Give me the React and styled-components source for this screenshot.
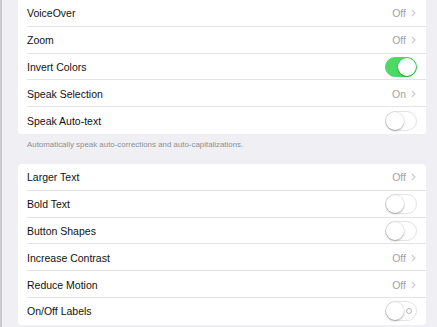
import React from "react";
import styled, { createGlobalStyle } from "styled-components";

const GlobalStyle = createGlobalStyle`
  html, body {
    margin: 0;
    padding: 0;
    background: #efeff4;
  }
  body {
    font-family: "Liberation Sans", Arial, sans-serif;
    -webkit-font-smoothing: antialiased;
  }
`;

const Page = styled.div`
  width: 437px;
  height: 327px;
  overflow: hidden;
  box-sizing: border-box;
  border-left: 2px solid #c9c9ce;
  padding: 0 11px 0 16px;
  background: #efeff4;
`;

const Card = styled.div`
  background: #fff;
  border-radius: ${(p) => (p.$flatTop ? "0 0 4px 4px" : "4px")};
  overflow: hidden;
`;

const Row = styled.div`
  height: 26.8px;
  display: flex;
  align-items: center;
  justify-content: space-between;
  padding: 0 9px 0 9px;
  position: relative;
  &:not(:last-child)::after {
    content: "";
    position: absolute;
    left: 9px;
    right: 0;
    bottom: 0;
    height: 1px;
    background: #e4e4e7;
  }
`;

const Label = styled.span`
  font-size: 10.5px;
  color: #111;
`;

const Value = styled.span`
  display: flex;
  align-items: center;
  gap: 5px;
  font-size: 10.5px;
  color: #a2a2a7;
  padding-right: 1px;
`;

const Footer = styled.div`
  font-size: 7.9px;
  color: #8e8e93;
  padding: 6px 9px 0;
  height: 30px;
  box-sizing: border-box;
`;

const Toggle = styled.div`
  width: 32px;
  height: 20px;
  box-sizing: border-box;
  border-radius: 10px;
  position: relative;
  background: ${(p) => (p.$on ? "#4cd964" : "#fff")};
  border: 1px solid ${(p) => (p.$on ? "#4cd964" : "#e3e3e6")};
`;

const Knob = styled.div`
  position: absolute;
  top: 0;
  ${(p) => (p.$on ? "right: 0;" : "left: 0;")}
  width: 18px;
  height: 18px;
  border-radius: 50%;
  background: #fff;
  box-shadow: 0 1px 2px rgba(0, 0, 0, 0.3), 0 0 0 0.5px rgba(0, 0, 0, 0.08);
`;

const OffMark = styled.div`
  position: absolute;
  right: 4px;
  top: 6px;
  width: 4px;
  height: 4px;
  border-radius: 50%;
  border: 1px solid #b5b5ba;
`;

const Chevron = () => (
  <svg width="5" height="8" viewBox="0 0 5 8">
    <path d="M0.8 0.8 L4 4 L0.8 7.2" fill="none" stroke="#c7c7cc" strokeWidth="1.1" />
  </svg>
);

const Switch = ({ on, labels }) => (
  <Toggle $on={on}>
    {labels && !on && <OffMark />}
    <Knob $on={on} />
  </Toggle>
);

const Item = ({ label, value, toggle, on, labels }) => (
  <Row>
    <Label>{label}</Label>
    {toggle ? (
      <Switch on={on} labels={labels} />
    ) : (
      <Value>
        {value}
        <Chevron />
      </Value>
    )}
  </Row>
);

export default function App() {
  return (
    <>
      <GlobalStyle />
      <Page>
        <Card $flatTop>
          <Item label="VoiceOver" value="Off" />
          <Item label="Zoom" value="Off" />
          <Item label="Invert Colors" toggle on />
          <Item label="Speak Selection" value="On" />
          <Item label="Speak Auto-text" toggle />
        </Card>
        <Footer>Automatically speak auto-corrections and auto-capitalizations.</Footer>
        <Card>
          <Item label="Larger Text" value="Off" />
          <Item label="Bold Text" toggle />
          <Item label="Button Shapes" toggle />
          <Item label="Increase Contrast" value="Off" />
          <Item label="Reduce Motion" value="Off" />
          <Item label="On/Off Labels" toggle labels />
        </Card>
      </Page>
    </>
  );
}
